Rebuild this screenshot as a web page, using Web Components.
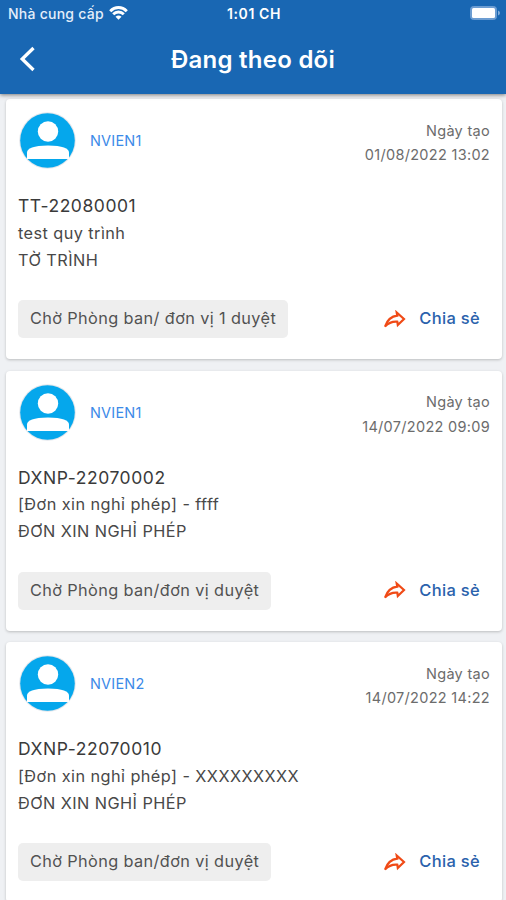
<!DOCTYPE html>
<html lang="vi">
<head>
<meta charset="utf-8">
<title>Đang theo dõi</title>
<style>
body {
    margin: 0;
    height: 900px;
    overflow: hidden;
    background-color: #eff1f4;
    font-family: Inter, "Noto Sans", sans-serif;
}
</style>
</head>
<body>
<follow-page>
    <app-header slot="header" carrier="Nhà cung cấp" time="1:01 CH">Đang theo dõi</app-header>
    <request-card user="NVIEN1" date="01/08/2022 13:02" code="TT-22080001" status="Chờ Phòng ban/ đơn vị 1 duyệt">
        <span slot="subject">test quy trình</span>
        <span slot="kind">TỜ TRÌNH</span>
    </request-card>
    <request-card user="NVIEN1" date="14/07/2022 09:09" code="DXNP-22070002" status="Chờ Phòng ban/đơn vị duyệt">
        <span slot="subject">[Đơn xin nghỉ phép] - ffff</span>
        <span slot="kind">ĐƠN XIN NGHỈ PHÉP</span>
    </request-card>
    <request-card user="NVIEN2" date="14/07/2022 14:22" code="DXNP-22070010" status="Chờ Phòng ban/đơn vị duyệt">
        <span slot="subject">[Đơn xin nghỉ phép] - XXXXXXXXX</span>
        <span slot="kind">ĐƠN XIN NGHỈ PHÉP</span>
    </request-card>
</follow-page>

<script>
class FollowPage extends HTMLElement {
    constructor() {
        super();
        this.attachShadow({ mode: 'open' });
        this.shadowRoot.innerHTML = `
<style>
:host { display: block; }
main {
    display: flex;
    flex-direction: column;
    gap: 11.5px;
    padding: 5px 4px 0 6px;
}
</style>
<slot name="header"></slot>
<main><slot></slot></main>`;
    }
}
window.customElements.define('follow-page', FollowPage);

class AppHeader extends HTMLElement {
    constructor() {
        super();
        this.attachShadow({ mode: 'open' });
        this.shadowRoot.innerHTML = `
<style>
:host {
    display: block;
    position: relative;
    height: 94px;
    color: white;
    background-color: #1967b3;
    box-shadow: 0 1px 4px rgba(0, 0, 0, 0.5);
}
.status, .bar {
    display: grid;
    grid-template-columns: 1fr auto 1fr;
    align-items: center;
}
.status {
    height: 27px;
    padding: 0 6px 0 8px;
    font-size: 14px;
    line-height: 26px;
    font-weight: 500;
}
.carrier {
    display: flex;
    align-items: center;
    gap: 5px;
    color: #e4eefa;
    letter-spacing: 0.25px;
}
.carrier svg, .battery { margin-top: -2px; }
.time { font-weight: 600; letter-spacing: 0.6px; }
.battery { justify-self: end; }
.bar {
    height: 65px;
    padding: 0 0 0 18px;
}
.back { margin-top: -2px; }
h1 {
    margin: 0 18px 0 0;
    font-size: 24px;
    line-height: 30px;
    font-weight: 600;
    letter-spacing: 0.25px;
}
svg { display: block; }
</style>
<div class="status">
    <div class="carrier">
        <span id="carrier"></span>
        <svg width="19" height="14" viewBox="0 0 19 14" fill="none" stroke="white" stroke-width="2.9">
            <path d="M1.2 5.2C6 .3 13 .3 17.8 5.2M4.2 8.3C7.2 5.3 11.8 5.3 14.8 8.3"/>
            <path d="M6.5 10.7Q9.5 8.2 12.5 10.7L9.5 13.8Z" fill="white" stroke="none"/>
        </svg>
    </div>
    <span class="time" id="time"></span>
    <svg class="battery" width="30" height="14" viewBox="0 0 30 14">
        <rect x=".5" y=".5" width="26" height="13" rx="3" fill="#6c9dd2" stroke="#6c9dd2"/>
        <rect x="2" y="2" width="23" height="10" rx="1.5" fill="white"/>
        <path d="M28 4.5q2 .8 2 2.5t-2 2.5Z" fill="#83addb"/>
    </svg>
</div>
<div class="bar">
    <svg class="back" width="20" height="26" viewBox="0 0 20 26" fill="none" stroke="white" stroke-width="3.3">
        <path d="M15.5 2 4.2 13l11.3 11"/>
    </svg>
    <h1><slot></slot></h1>
</div>`;
    }

    connectedCallback() {
        this.shadowRoot.getElementById('carrier').textContent = this.getAttribute('carrier');
        this.shadowRoot.getElementById('time').textContent = this.getAttribute('time');
    }
}
window.customElements.define('app-header', AppHeader);

class UserAvatar extends HTMLElement {
    constructor() {
        super();
        this.attachShadow({ mode: 'open' });
        this.shadowRoot.innerHTML = `
<style>
:host { display: block; width: 58px; height: 58px; }
svg { display: block; }
</style>
<svg width="58" height="58" viewBox="0 0 58 58">
    <circle cx="29.5" cy="28.5" r="28.3" fill="#e3e6eb"/>
    <circle cx="29.5" cy="28.5" r="27.3" fill="#05a7ec"/>
    <circle cx="30" cy="19.5" r="10.2" fill="white"/>
    <path d="M9 47V40.5C9 36.5 15.500 33.500 30 33.500S51 36.500 51 40.500V47Z" fill="white"/>
</svg>`;
    }
}
window.customElements.define('user-avatar', UserAvatar);

class ShareButton extends HTMLElement {
    constructor() {
        super();
        this.attachShadow({ mode: 'open' });
        this.shadowRoot.innerHTML = `
<style>
:host {
    display: flex;
    align-items: center;
    gap: 13px;
    margin-top: -2px;
    color: #2a62ac;
    font-size: 16.5px;
    font-weight: 500;
    line-height: 24px;
    letter-spacing: 0.3px;
}
svg { margin-top: 2px; }
</style>
<svg width="23" height="19" viewBox="0 0 23 19" fill="none" stroke="#f04a16" stroke-width="2.2">
    <path d="M2 16.5C4.500 9.500 8 6.300 14.200 5.700L13.700 2.500 21 9 14.800 15 14.300 11.700C9 11.300 5.500 12.800 2 16.500Z"/>
</svg>
<slot></slot>`;
    }
}
window.customElements.define('share-button', ShareButton);

class RequestCard extends HTMLElement {
    constructor() {
        super();
        this.attachShadow({ mode: 'open' });
        this.shadowRoot.innerHTML = `
<style>
:host {
    display: block;
    box-sizing: border-box;
    height: 260px;
    padding: 13px 12px 0;
    border-radius: 4px;
    color: #484848;
    background-color: white;
    box-shadow: 0 1px 3px rgba(0, 0, 0, 0.22);
}
.top {
    display: flex;
    height: 58px;
}
.name {
    flex: 1;
    margin-left: 14px;
    font-size: 14.5px;
    line-height: 57px;
    color: #3c8ae8;
    letter-spacing: 0.2px;
}
.created {
    margin-top: 6.5px;
    text-align: right;
    font-size: 14.5px;
    line-height: 24.5px;
    color: #6c6c6c;
    letter-spacing: 0.3px;
}
.body {
    display: flex;
    flex-direction: column;
    margin-top: 22px;
    font-size: 16.3px;
    line-height: 27px;
    letter-spacing: 0.43px;
}
.code {
    font-size: 17.5px;
    color: #3a3a3a;
    letter-spacing: 0.55px;
    margin-bottom: 0.5px;
}
.bottom {
    display: flex;
    align-items: center;
    justify-content: space-between;
    margin-top: 26.5px;
    padding-right: 10px;
}
.state {
    height: 38px;
    padding: 0 12px;
    border-radius: 5px;
    background-color: #eeeeee;
    color: #525252;
    font-size: 16.3px;
    line-height: 37px;
    letter-spacing: 0.38px;
}
</style>
<div class="top">
    <user-avatar></user-avatar>
    <span class="name" id="user"></span>
    <div class="created"><div>Ngày tạo</div><div id="date"></div></div>
</div>
<div class="body">
    <span class="code" id="code"></span>
    <slot name="subject"></slot>
    <slot name="kind"></slot>
</div>
<div class="bottom">
    <span class="state" id="status"></span>
    <share-button>Chia sẻ</share-button>
</div>`;
    }

    connectedCallback() {
        for (const name of ['user', 'date', 'code', 'status']) {
            this.shadowRoot.getElementById(name).textContent = this.getAttribute(name);
        }
    }
}
window.customElements.define('request-card', RequestCard);
</script>
</body>
</html>
